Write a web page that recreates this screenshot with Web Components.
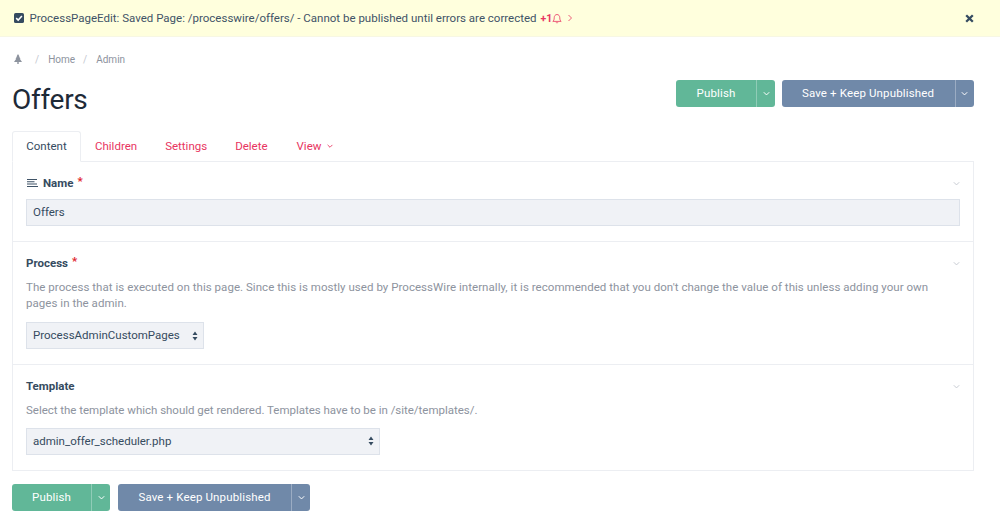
<!DOCTYPE html>
<html lang="en"><head><meta charset="utf-8"><title>Offers</title>
<style>
html,body{margin:0;padding:0;background:#fff;height:525px;overflow:hidden}
body{font-family:Roboto,"Liberation Sans",sans-serif;color:#354b60;font-size:11.5px}
</style></head><body>
<pw-notice></pw-notice>
<pw-main></pw-main>
<script>
const chev=(c,s=9)=>`<svg width="${s}" height="${s}" viewBox="0 0 10 10" fill="none" stroke="${c}" stroke-width="1.1" style="display:block"><path d="M2 3.6 5 6.6 8 3.6"/></svg>`;
function def(name,html){customElements.define(name,class extends HTMLElement{constructor(){super();this.attachShadow({mode:'open'})}
connectedCallback(){this.shadowRoot.innerHTML=typeof html==='function'?html(this):html}})}

def('pw-notice',`<style>
:host{display:flex;align-items:center;height:37px;background:#ffffdd;box-shadow:inset 0 -1px 0 #f7f7e4;padding:0 26px 1px 14px;box-sizing:border-box;font-size:11.5px;color:#3f5367}
.msg{margin-left:5.500px;white-space:nowrap}
.n{color:#e83561;font-weight:700;margin-left:4px;font-size:10.5px}
.grow{flex:1}
svg{display:block;flex:none}
</style>
<svg width="10" height="10" viewBox="0 0 10 10"><rect width="10" height="10" rx="1.6" fill="#354b60"/><path d="M2.2 5.1 4.2 7.1 7.9 3.1" fill="none" stroke="#fff" stroke-width="1.5"/></svg>
<span class="msg">ProcessPageEdit: Saved Page: /processwire/offers/ - Cannot be published until errors are corrected</span>
<span class="n">+1</span>
<svg width="10" height="11" viewBox="0 0 10 11" fill="none" stroke="#e83561" stroke-width=".8"><path d="M.8 8.4c1-.8 1.4-1.6 1.4-3.6C2.200 3 3.300 1.500 5 1.500S7.800 3 7.800 4.800c0 2 .4 2.800 1.400 3.600Z"/><path d="M4 9.300c.3.800 1.700.8 2 0"/></svg>
<svg style="margin-left:5px" width="6" height="8" viewBox="0 0 6 8" fill="none" stroke="#e83561" stroke-width=".8"><path d="M1.500 1 4.500 4 1.500 7"/></svg>
<span class="grow"></span>
<svg width="9" height="9" viewBox="0 0 9 9" fill="none" stroke="#354b60" stroke-width="2.300"><path d="M1.200 1.200 7.800 7.800M7.800 1.200 1.200 7.800"/></svg>`);

def('pw-crumbs',`<style>
:host{display:flex;align-items:center;height:14px;font-size:10px;color:#8d939e}
.s{color:#c4c8cf;margin:0 9px 0 8px}
.s.f{margin:0 9px 0 13px}
svg{display:block}
</style>
<svg width="8" height="10" viewBox="0 0 8 10" fill="#8d939e"><path d="M4 0 5.500 2.400H5L6.500 4.800H5.800L8 8H4.700V10H3.300V8H0L2.200 4.800H1.500L3 2.400H2.500Z"/></svg>
<span class="s f">/</span><span>Home</span><span class="s">/</span><span>Admin</span>`);

def('pw-button',h=>{const w=h.getAttribute('w'),c=h.getAttribute('color');return `<style>
:host{display:inline-flex;height:27px;color:#fff;font-size:11.5px;flex:none}
.a,.b{display:flex;align-items:center;justify-content:center;background:${c};box-sizing:border-box;padding-bottom:1px}
.a{width:${w}px;border-radius:3px 0 0 3px;letter-spacing:.012em}
.b{width:19px;border-radius:0 3px 3px 0;border-left:1px solid rgba(255,255,255,.3)}
</style><div class="a"><slot></slot></div><div class="b">${chev('#fff')}</div>`});

def('pw-tabs',`<style>
:host{display:flex;height:31px;box-sizing:border-box;margin-bottom:-1px;position:relative;font-size:11.5px;color:#e83561;align-items:stretch}
span{display:flex;align-items:center;white-space:nowrap;padding-bottom:1px}
.on{color:#354b60;background:#fff;border:1px solid #eceef2;border-bottom-color:#fff;border-radius:3px 3px 0 0;width:69px;justify-content:center;box-sizing:border-box;}
.t{margin-left:14px}
.t + .t{margin-left:28px}
.t.v{margin-left:29px;gap:5px}
</style>
<span class="on">Content</span><span class="t">Children</span><span class="t">Settings</span><span class="t">Delete</span><span class="t v">View ${chev('#e83561',8)}</span>`);

def('pw-field',h=>`<style>
:host{display:block;position:relative;box-sizing:border-box;padding:13px 13px 0 13px;border-top:1px solid #eceef2;height:${h.getAttribute('h')}px}
:host(:first-child){border-top:0}
.lab{display:flex;align-items:center;gap:5px;height:16px;font-weight:700;font-size:11.5px;color:#354b60}
.req{color:#e0242c;font-weight:700;line-height:1;margin-left:-1px;margin-top:-2px;font-size:11.5px}
.d{color:#8d939e;font-size:11.5px;line-height:16px;margin-top:8px;max-width:912px;letter-spacing:${h.getAttribute('ls')||0}px}
.c{position:absolute;right:12px;top:17px}
.ctl{margin-top:${h.getAttribute('ctl')||'8'}px}
svg{display:block}
</style>
<div class="lab"><slot name="icon"></slot>${h.getAttribute('label')}${h.hasAttribute('req')?'<span class="req">*</span>':''}</div>
${h.hasAttribute('desc')?`<div class="d">${h.getAttribute('desc')}</div>`:''}
<div class="ctl"><slot></slot></div>
<div class="c">${chev('#c6cad1')}</div>`);

def('pw-input',h=>`<style>
:host{display:flex;align-items:center;position:relative;height:27px;box-sizing:border-box;background:#f0f2f6;border:1px solid #dde2ea;padding:0 6px 1px;font-size:11.5px;color:#354b60;width:${h.getAttribute('w')||'auto'}}
svg{position:absolute;right:5px;top:7.500px}
</style><slot></slot>${h.hasAttribute('select')?'<svg width="6" height="10" viewBox="0 0 6 10" fill="#354b60"><path d="M3 .5 5.500 4H.5ZM3 9.500 .5 6H5.500Z"/></svg>':''}`);

def('pw-main',`<style>
:host{display:block;padding:0 26px 0 12px}
pw-crumbs{margin-top:15px;padding-left:2px}
.head{display:flex;align-items:flex-start;justify-content:space-between}
h1{margin:0;padding-top:12px;font-size:28px;line-height:44px;font-weight:400;color:#1e2a38;letter-spacing:-.01em}
.btns{display:flex;gap:6.500px;padding-top:14px;margin-right:.5px}
.panel{border:1px solid #eceef2;height:310px;box-sizing:border-box}
.foot{display:flex;gap:8px;margin-top:13px}
pw-tabs{margin-top:9px}
svg{display:block}
</style>
<pw-crumbs></pw-crumbs>
<div class="head"><h1>Offers</h1>
<div class="btns"><pw-button w="80" color="#61b798">Publish</pw-button><pw-button w="173" color="#7089a9">Save + Keep Unpublished</pw-button></div></div>
<pw-tabs></pw-tabs>
<div class="panel">
<pw-field label="Name" req h="79"><svg slot="icon" style="margin-left:1px" width="11" height="8" viewBox="0 0 11 8" fill="#3f5367"><path d="M0 0H10V1H0ZM0 2.300H7.500V3.300H0ZM0 4.600H10V5.600H0ZM0 7H11V8H0Z"/></svg><pw-input>Offers</pw-input></pw-field>
<pw-field label="Process" req h="122.5" ls="0.04" desc="The process that is executed on this page. Since this is mostly used by ProcessWire internally, it is recommended that you don't change the value of this unless adding your own pages in the admin." ctl="11"><pw-input select w="178px">ProcessAdminCustomPages</pw-input></pw-field>
<pw-field label="Template" h="107.5" ls="-0.02" desc="Select the template which should get rendered. Templates have to be in /site/templates/." ctl="10"><pw-input select w="354px">admin_offer_scheduler.php</pw-input></pw-field>
</div>
<div class="foot"><pw-button w="79" color="#61b798">Publish</pw-button><pw-button w="173" color="#7089a9">Save + Keep Unpublished</pw-button></div>`);
</script>
</body></html>
